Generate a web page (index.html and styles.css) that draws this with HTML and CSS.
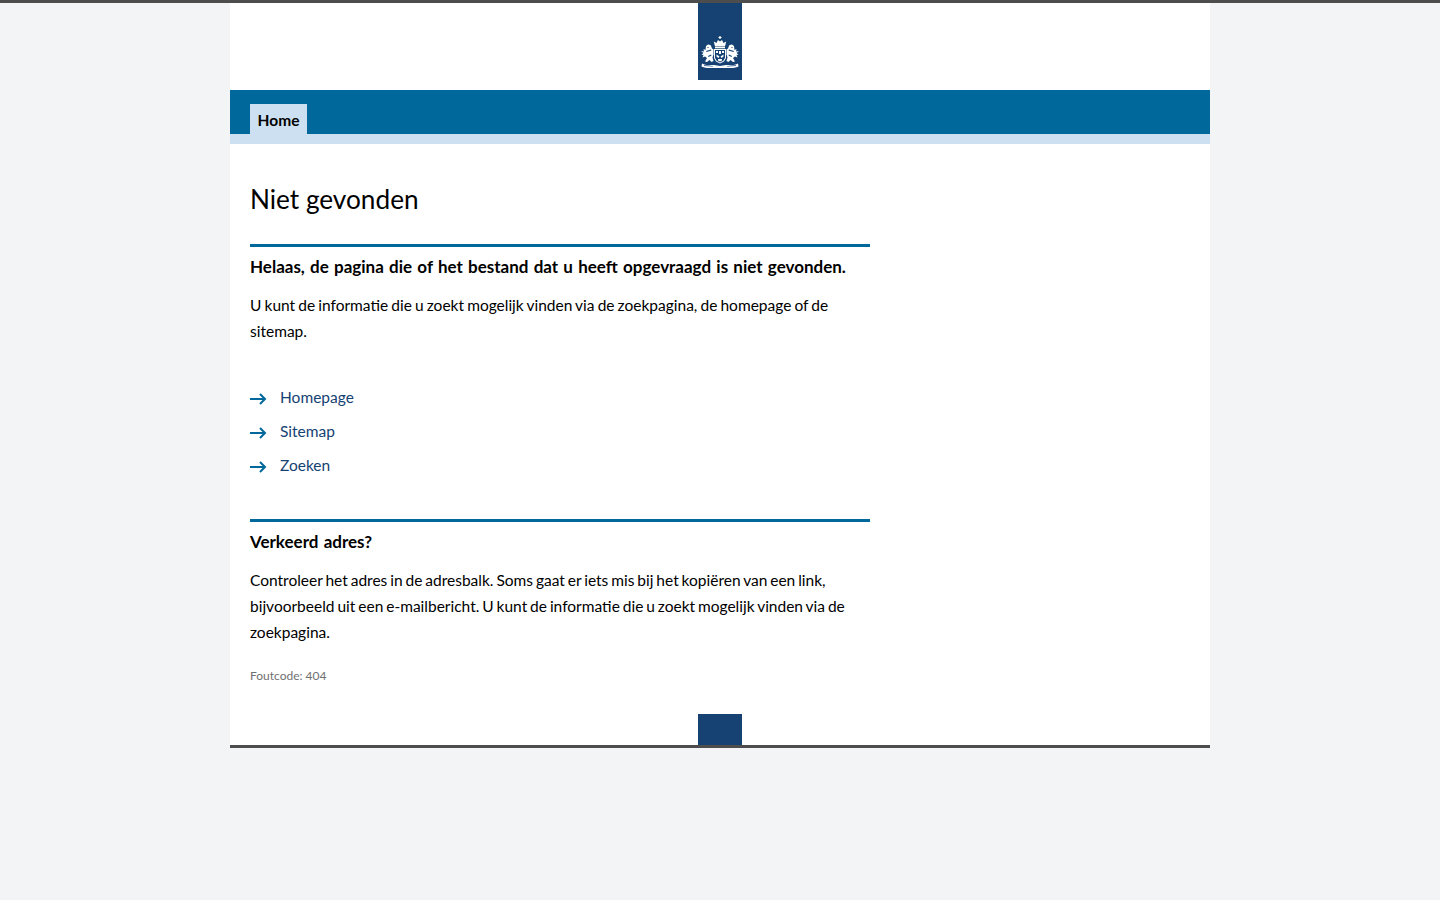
FILE: index.html
```html
<!DOCTYPE html>
<html lang="nl">
<head>
<meta charset="utf-8">
<title>Niet gevonden</title>
<link rel="stylesheet" href="styles.css">
</head>
<body>
<div class="page">
  <header class="header">
    <div class="logo">
      <svg class="emblem" viewBox="0 0 40 34" width="40" height="34" aria-hidden="true">
        <g fill="#fff">
          <rect x="19.400" y="0" width="1.200" height="3"/>
          <rect x="18.500" y="1" width="3" height="1"/>
          <path d="M15 10.500l-1.200-5 2.700 1.500 1.500-3 2 1.500 2-1.500 1.500 3 2.700-1.500-1.200 5z"/>
          <rect x="15" y="11" width="10" height="1.300"/>
          <path d="M14 13h12v9l-2 3.500-4 2-4-2-2-3.500z"/>
          <path d="M6 10l2-1.500 2.500.5 1 2 .5 1.500 1.500 1v5l-1 3 1 3.500-2 1-2-2-2.500 2-2-.5 2-3.500-2-1.500-2.500 1 1-2.500-2-.5 2-1.500-2.500-2 3 .5-.5-2.500 2 1z"/>
          <path d="M34 10l-2-1.500-2.500.5-1 2-.5 1.500-1.500 1v5l1 3-1 3.500 2 1 2-2 2.500 2 2-.5-2-3.500 2-1.500 2.500 1-1-2.500 2-.5-2-1.500 2.500-2-3 .5.5-2.500-2 1z"/>
          <path d="M2 27.500c4 2.500 8 1.500 11 1.500l1 0 6 1 6-1 1 0c3 0 7 1 11-1.500l.5 3c-4 2-8 1.500-11.500 1.500H13c-3.500 0-7.500.5-11.500-1.500z"/>
        </g>
        <g fill="#154273">
          <path d="M15 14h10v7.700l-1.700 3-3.300 1.700-3.300-1.700-1.700-3z"/>
        </g>
        <g fill="#fff">
          <path d="M16 15h2v2h-2zM19 15h2v3h-2zM22 15h2v2h-2zM16.500 18.500l3 2-1 1.500-2-1.500zM23.500 18.500l-3 2 1 1.500 2-1.500zM18 23h4v1.500l-2 1-2-1z"/>
        </g>
        <g fill="#154273">
          <path d="M7.500 11h1v1h-1zM31.500 11h1v1h-1zM6 15l5-1.500.5 1-5 1.500zM34 15l-5-1.500-.5 1 5 1.500zM8 20l3-1.500.5 1-3 1.500zM32 20l-3-1.500-.5 1 3 1.500z"/>
          <path d="M4 29.200l9 .8v.4l-9-.4zM36 29.200l-9 .8v.4l9-.4z"/>
        </g>
      </svg>
    </div>
  </header>
  <nav class="nav">
    <a class="tab" href="#">Home</a>
  </nav>
  <main class="content">
    <h1 class="title">Niet gevonden</h1>
    <section class="block">
      <h2 class="subtitle">Helaas, de pagina die of het bestand dat u heeft opgevraagd is niet gevonden.</h2>
      <p class="text">U kunt de informatie die u zoekt mogelijk vinden via de zoekpagina, de homepage of de sitemap.</p>
      <ul class="links">
        <li class="link-item"><svg class="arrow" viewBox="0 0 17 12" width="17" height="12" aria-hidden="true"><path d="M0 6h15M10 1l5 5-5 5" fill="none" stroke="#01689b" stroke-width="2"/></svg><a href="#">Homepage</a></li>
        <li class="link-item"><svg class="arrow" viewBox="0 0 17 12" width="17" height="12" aria-hidden="true"><path d="M0 6h15M10 1l5 5-5 5" fill="none" stroke="#01689b" stroke-width="2"/></svg><a href="#">Sitemap</a></li>
        <li class="link-item"><svg class="arrow" viewBox="0 0 17 12" width="17" height="12" aria-hidden="true"><path d="M0 6h15M10 1l5 5-5 5" fill="none" stroke="#01689b" stroke-width="2"/></svg><a href="#">Zoeken</a></li>
      </ul>
    </section>
    <section class="block">
      <h2 class="subtitle">Verkeerd adres?</h2>
      <p class="text text-tight">Controleer het adres in de adresbalk. Soms gaat er iets mis bij het kopiëren van een link, bijvoorbeeld uit een e-mailbericht. U kunt de informatie die u zoekt mogelijk vinden via de zoekpagina.</p>
    </section>
    <p class="code">Foutcode: 404</p>
  </main>
  <footer class="footer"><div class="foot-logo"></div></footer>
</div>
</body>
</html>
```
FILE: styles.css
```css
* { box-sizing: border-box; }
html, body { margin: 0; padding: 0; }
body {
  background: #f3f4f6;
  border-top: 3px solid #4d4d4d;
  font-family: "Lato", "Noto Sans", sans-serif;
  color: #000;
  font-size: 15.500px;
  line-height: 26px;
}
.page { width: 980px; margin: 0 auto; background: #fff; border-bottom: 3px solid #4d4d4d; }
.header { height: 87px; display: flex; justify-content: center; align-items: flex-start; }
.logo { width: 44px; height: 77px; background: #154273; display: flex; align-items: flex-end; justify-content: center; padding-bottom: 10px; }
.emblem { display: block; }
.nav { height: 54px; background: #01689b; border-bottom: 10px solid #cce0f1; padding: 14px 20px 0; display: flex; }
.tab { height: 30px; width: 57px; background: #cce0f1; color: #000; font-weight: 700; font-size: 15.500px; line-height: 33px; text-align: center; text-decoration: none; }
.content { padding: 0 20px; }
.title { margin: 0; padding-top: 38px; font-size: 26.200px; line-height: 35px; font-weight: 400; height: 100px; }
.block { width: 620px; border-top: 3px solid #01689b; }
.subtitle { margin: 0; padding-top: 7px; font-size: 17px; line-height: 26px; font-weight: 700; word-spacing: 1.100px; }
.text { margin: 12px 0 0; word-spacing: -.85px; }
.text-tight { word-spacing: -1.050px; }
.links { list-style: none; margin: 36px 0 0; padding: 0 0 37px; }
.link-item { display: flex; align-items: center; gap: 13px; height: 34px; }
.link-item a { color: #154273; text-decoration: none; }
.arrow { display: block; flex: none; position: relative; top: 2px; }
.code { margin: 18px 0 0; font-size: 12px; line-height: 26px; color: #707070; }
.footer { display: flex; justify-content: center; padding-top: 25px; }
.foot-logo { width: 44px; height: 31px; background: #154273; }
```
